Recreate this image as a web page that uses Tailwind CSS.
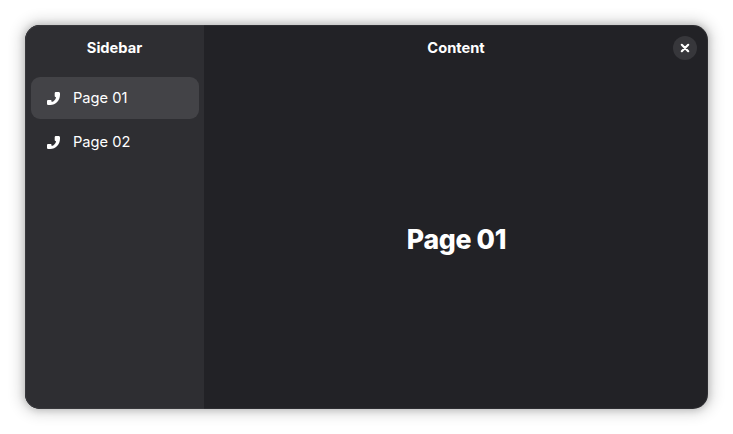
<!DOCTYPE html>
<html lang="en">
<head>
<meta charset="utf-8">
<title>Page 01</title>
<script src="https://cdn.jsdelivr.net/npm/@tailwindcss/browser@4"></script>
</head>
<body class="h-screen overflow-hidden bg-white p-[25px] font-['Inter',sans-serif] text-[14.67px] leading-5 text-white">
<svg class="hidden"><symbol id="phone" viewBox="0 0 16 16"><path fill="currentColor" d="M11.3 2h2.2c.9 0 1.5.6 1.5 1.6v1.2C15 10.6 10.7 15 5.2 15H3.6C2.6 15 2 14.4 2 13.4v-2c0-.8.5-1.3 1.3-1.3h2c.8 0 1.3.5 1.3 1.2v.7c2.3-.6 4-2.4 4.5-4.8h-.2c-.7 0-1.2-.5-1.2-1.2V3.3c0-.8.6-1.3 1.6-1.3Z"/></symbol></svg>
<div class="relative flex h-[384px] w-[683px] overflow-hidden rounded-[15px] bg-[#222226] shadow-[0_0_14px_5px_rgba(0,0,0,0.14),0_0_7px_1px_rgba(0,0,0,0.18)]">
  <aside class="w-[179px] bg-[#2e2e32]">
    <header class="flex h-[46px] items-center justify-center font-bold">Sidebar</header>
    <nav class="flex flex-col gap-0.5 px-1.5 pt-1.5">
      <a class="flex h-[42px] w-[168px] items-center gap-3 rounded-[9px] bg-[#434347] pl-[14px]"><svg class="size-4"><use href="#phone"/></svg>Page 01</a>
      <a class="flex h-[42px] w-[168px] items-center gap-3 rounded-[9px] pl-[14px]"><svg class="size-4"><use href="#phone"/></svg>Page 02</a>
    </nav>
  </aside>
  <main class="flex flex-1 flex-col">
    <header class="grid h-[46px] grid-cols-[1fr_auto_1fr] items-center pr-[11px] pl-[11px]">
      <span></span>
      <span class="font-bold">Content</span>
      <button class="flex size-6 items-center justify-center justify-self-end rounded-full bg-[#37373b]" aria-label="Close">
        <svg class="size-4" viewBox="0 0 16 16" fill="none" stroke="currentColor" stroke-width="2.2" stroke-linecap="round"><path d="m4.8 4.8 6.4 6.4m0-6.4-6.4 6.4"/></svg>
      </button>
    </header>
    <h1 class="flex flex-1 items-center justify-center pb-0.5 pl-px text-[26.6px] font-extrabold tracking-[-0.3px]">Page 01</h1>
  </main>
  <div class="pointer-events-none absolute inset-0 rounded-[15px] border border-white/5"></div>
</div>
</body>
</html>
